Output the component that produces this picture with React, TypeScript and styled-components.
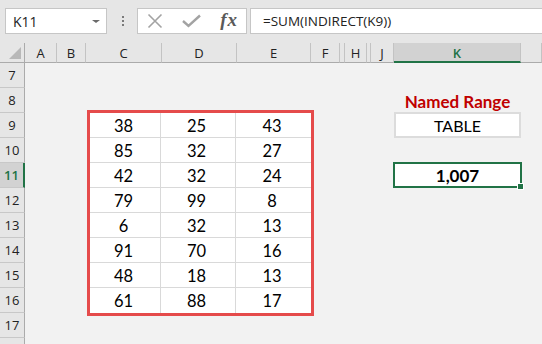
import React from "react"
import styled, { createGlobalStyle } from "styled-components"

const GlobalStyle = createGlobalStyle`
  html, body {
    margin: 0;
    padding: 0;
    background: #f2f2f2;
    overflow: hidden;
  }
  * { box-sizing: border-box; }
`

const UI_FONT = `"Open Sans", "Noto Sans", sans-serif`
const CELL_FONT = `Lato, "Noto Sans", sans-serif`
const GREEN = "#217346"

const Page = styled.div`
  width: 542px;
  height: 344px;
  overflow: hidden;
  font-family: ${UI_FONT};
`

const TopBar = styled.div`
  height: 43px;
  background: #e6e6e6;
  display: flex;
  align-items: flex-start;
  padding: 8px 0 0 5px;
`

const Field = styled.div`
  height: 26px;
  background: #fff;
  border: 1px solid #c6c6c6;
  display: flex;
  align-items: center;
`

const NameBox = styled(Field)`
  width: 102px;
  padding: 0 6px 0 7px;
  justify-content: space-between;
  font-size: 14px;
  color: #222;
`

const DropArrow = styled.span`
  width: 0;
  height: 0;
  border-left: 4px solid transparent;
  border-right: 4px solid transparent;
  border-top: 3px solid #6a6a6a;
  margin-top: 1px;
`

const Grip = styled.div`
  width: 30px;
  height: 26px;
  display: flex;
  flex-direction: column;
  align-items: center;
  justify-content: center;
  gap: 2px;
  padding-left: 1px;
`

const GripDot = styled.span`
  width: 2px;
  height: 2px;
  background: #7a7a7a;
`

const FxButtons = styled(Field)`
  width: 110px;
  padding: 0 8px 0 9px;
  justify-content: space-between;
`

const FxLabel = styled.span`
  font-family: "Liberation Serif", "DejaVu Serif", serif;
  font-style: italic;
  font-weight: bold;
  font-size: 19px;
  color: #5a5a5a;
  letter-spacing: 1px;
  margin-top: -2px;
`

const FormulaInput = styled(Field)`
  flex: 1;
  margin-left: 3px;
  border-right: none;
  padding-left: 12px;
  font-size: 13.5px;
  color: #222;
`

const Sheet = styled.div`
  display: grid;
  grid-template-columns: 25px 32px 29px 76px 75px 74px 29px 5px 22px 4px 23px 127px 1fr;
  grid-template-rows: 20px repeat(12, 25px);
`

const Corner = styled.div`
  grid-row: 1;
  grid-column: 1;
  background: #e6e6e6;
  border-right: 1px solid #ababab;
  border-bottom: 1px solid #ababab;
  position: relative;
  &::after {
    content: "";
    position: absolute;
    right: 3px;
    bottom: 3px;
    width: 0;
    height: 0;
    border-left: 12px solid transparent;
    border-bottom: 12px solid #b8b8b8;
  }
`

const ColHead = styled.div<{ $col: number; $active?: boolean }>`
  grid-row: 1;
  grid-column: ${(p) => p.$col};
  background: ${(p) => (p.$active ? "#d2d2d2" : "#e6e6e6")};
  border-right: 1px solid #c3c3c3;
  border-bottom: ${(p) => (p.$active ? `2px solid ${GREEN}` : "1px solid #ababab")};
  color: ${(p) => (p.$active ? GREEN : "#222")};
  font-weight: ${(p) => (p.$active ? 600 : 400)};
  font-size: 13px;
  display: flex;
  align-items: center;
  justify-content: center;
  padding-top: 1px;
`

const RowHead = styled.div<{ $row: number; $active?: boolean }>`
  grid-column: 1;
  grid-row: ${(p) => p.$row};
  background: ${(p) => (p.$active ? "#d2d2d2" : "#e6e6e6")};
  border-right: ${(p) => (p.$active ? `2px solid ${GREEN}` : "1px solid #ababab")};
  border-bottom: 1px solid #c8c8c8;
  color: ${(p) => (p.$active ? GREEN : "#222")};
  font-weight: ${(p) => (p.$active ? 600 : 400)};
  font-size: 13px;
  display: flex;
  align-items: center;
  justify-content: center;
`

const KCell = styled.div<{ $row: number }>`
  grid-column: 12;
  grid-row: ${(p) => p.$row};
  display: flex;
  align-items: center;
  justify-content: center;
  font-family: ${CELL_FONT};
  font-size: 16px;
  color: #000;
`

const Title = styled(KCell)`
  color: #c00000;
  font-weight: bold;
  font-size: 17px;
  padding-top: 2px;
`

const NameCell = styled(KCell)`
  background: #fff;
  border: 2px solid #dcdcdc;
  margin-top: -1px;
`

const ResultCell = styled(KCell)`
  background: #fff;
  border: 2px solid ${GREEN};
  font-weight: bold;
  font-size: 17px;
  margin: -1px -1px 0 -1px;
  position: relative;
`

const FillHandle = styled.span`
  position: absolute;
  right: -4px;
  bottom: -4px;
  width: 7px;
  height: 7px;
  background: ${GREEN};
  border: 1px solid #fff;
`

const Table = styled.div`
  grid-column: 4 / 7;
  grid-row: 4 / 12;
  margin: -3px -3px -3px 1px;
  border: 3px solid #e54b4b;
  background: #fff;
  display: grid;
  grid-template-columns: 71px 75px 1fr;
  grid-template-rows: repeat(8, 1fr);
`

const TCell = styled.div<{ $lastCol: boolean; $lastRow: boolean }>`
  border-right: ${(p) => (p.$lastCol ? "none" : "1px solid #d9d9d9")};
  border-bottom: ${(p) => (p.$lastRow ? "none" : "1px solid #d9d9d9")};
  display: flex;
  align-items: center;
  justify-content: center;
  padding: 1px 3px 0 0;
  font-family: ${CELL_FONT};
  font-size: 16.5px;
  color: #000;
`

const columns = [
  { col: 2, label: "A" },
  { col: 3, label: "B" },
  { col: 4, label: "C" },
  { col: 5, label: "D" },
  { col: 6, label: "E" },
  { col: 7, label: "F" },
  { col: 8, label: "" },
  { col: 9, label: "H" },
  { col: 10, label: "" },
  { col: 11, label: "J" },
  { col: 12, label: "K" },
  { col: 13, label: "" },
]

const data = [
  [38, 25, 43],
  [85, 32, 27],
  [42, 32, 24],
  [79, 99, 8],
  [6, 32, 13],
  [91, 70, 16],
  [48, 18, 13],
  [61, 88, 17],
]

// row 18 sits below the window edge, only its header strip shows
const rowNumbers = [7, 8, 9, 10, 11, 12, 13, 14, 15, 16, 17, null]

const CancelIcon = () => (
  <svg width="16" height="16" viewBox="0 0 16 16">
    <path d="M1.5 1.5 L14.5 14.5 M14.5 1.5 L1.5 14.5" stroke="#a3a3a3" strokeWidth="1.6" fill="none" />
  </svg>
)

const CheckIcon = () => (
  <svg width="19" height="14" viewBox="0 0 19 14">
    <path d="M1 7 L6.5 12 L18 1.5" stroke="#a3a3a3" strokeWidth="2.4" fill="none" />
  </svg>
)

export default function App() {
  return (
    <Page>
      <GlobalStyle />
      <TopBar>
        <NameBox>
          K11
          <DropArrow />
        </NameBox>
        <Grip>
          <GripDot />
          <GripDot />
          <GripDot />
        </Grip>
        <FxButtons>
          <CancelIcon />
          <CheckIcon />
          <FxLabel>fx</FxLabel>
        </FxButtons>
        <FormulaInput>=SUM(INDIRECT(K9))</FormulaInput>
      </TopBar>
      <Sheet>
        <Corner />
        {columns.map((c) => (
          <ColHead key={c.col} $col={c.col} $active={c.label === "K"}>
            {c.label}
          </ColHead>
        ))}
        {rowNumbers.map((n, i) => (
          <RowHead key={i} $row={i + 2} $active={n === 11}>
            {n}
          </RowHead>
        ))}
        <Title $row={3}>Named Range</Title>
        <NameCell $row={4}>TABLE</NameCell>
        <ResultCell $row={6}>
          1,007
          <FillHandle />
        </ResultCell>
        <Table>
          {data.map((row, r) =>
            row.map((v, c) => (
              <TCell key={`${r}-${c}`} $lastCol={c === 2} $lastRow={r === data.length - 1}>
                {v}
              </TCell>
            ))
          )}
        </Table>
      </Sheet>
    </Page>
  )
}
